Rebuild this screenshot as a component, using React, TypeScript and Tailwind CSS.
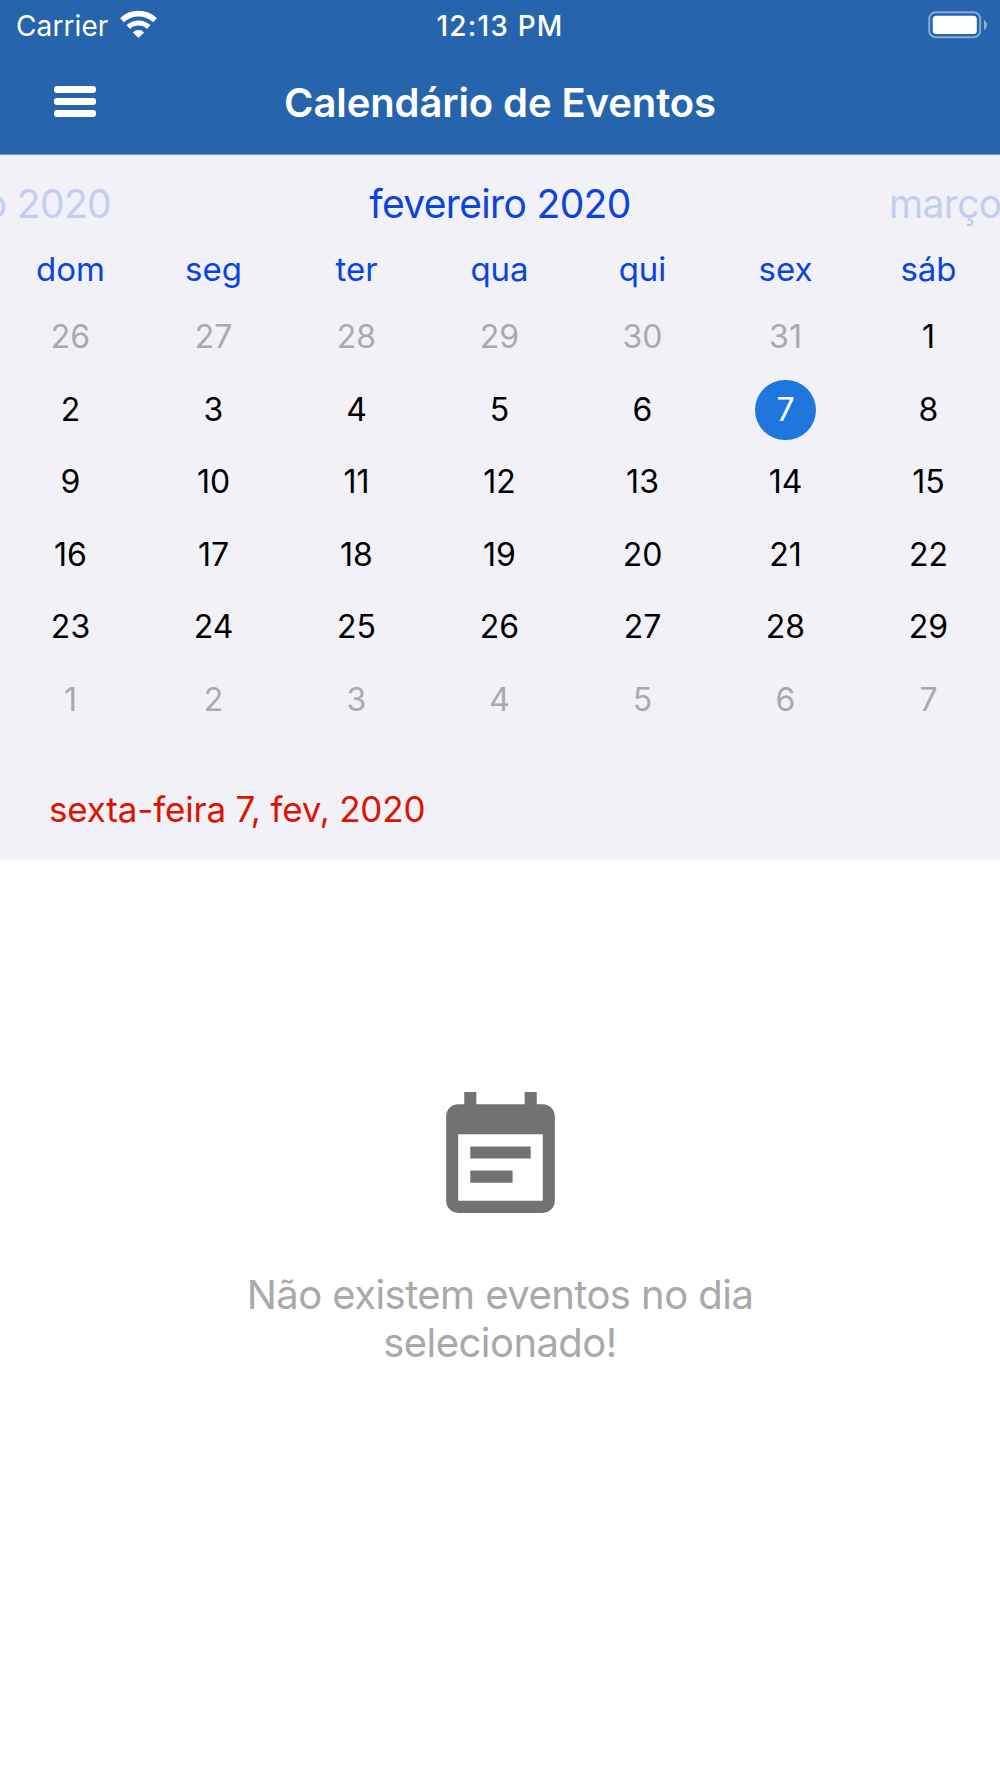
type Day = { day: number; muted?: boolean; selected?: boolean };

const weekdays = ['dom', 'seg', 'ter', 'qua', 'qui', 'sex', 'sáb'];

const days: Day[] = [
  ...[26, 27, 28, 29, 30, 31].map((day) => ({ day, muted: true })),
  ...Array.from({ length: 29 }, (_, i) => ({ day: i + 1, selected: i + 1 === 7 })),
  ...[1, 2, 3, 4, 5, 6, 7].map((day) => ({ day, muted: true })),
];

function WifiIcon() {
  return (
    <svg className="mb-[2px] ml-[12px] h-[28px] w-[37px]" viewBox="0 0 37 28" fill="none" stroke="white">
      <path d="M2 10.200a24 24 0 0 1 33 0" strokeWidth="5.600" />
      <path d="M8.300 17a15 15 0 0 1 20.400 0" strokeWidth="5.200" />
      <path d="M12.900 22.400a8 8 0 0 1 11.200 0L18.500 28z" fill="white" stroke="none" />
    </svg>
  );
}

function BatteryIcon() {
  return (
    <svg className="h-[28px] w-[59px]" viewBox="0 0 59 28">
      <rect x="1.200" y="1.200" width="51" height="25" rx="6.500" fill="none" stroke="white" strokeOpacity="0.45" strokeWidth="2" />
      <rect x="4.800" y="4.700" width="44" height="18.200" rx="3.500" fill="white" />
      <path d="M56 9c4 2.500 4 7.500 0 10z" fill="white" fillOpacity="0.5" />
    </svg>
  );
}

function Header() {
  return (
    <header className="h-[155px] border-b border-[#6d96cb] bg-[#2664ad] text-white">
      <div className="grid h-[50px] grid-cols-3 items-center">
        <div className="flex items-center pl-[16px] text-[28px]">
          <span className="pt-[2px] tracking-[0.1px]">Carrier</span>
          <WifiIcon />
        </div>
        <span className="pt-[2px] text-center text-[28px] font-[540] tracking-[1.2px]">12:13 PM</span>
        <div className="flex justify-end pr-[13px]">
          <BatteryIcon />
        </div>
      </div>
      <div className="grid h-[104px] grid-cols-[200px_1fr_200px] items-center">
        <button className="mb-[2px] ml-[54px] flex w-[42px] flex-col gap-[5px]" aria-label="Menu">
          <span className="h-[7px] w-full rounded-[3px] bg-white" />
          <span className="h-[7px] w-full rounded-[3px] bg-white" />
          <span className="h-[7px] w-full rounded-[3px] bg-white" />
        </button>
        <h1 className="pt-[2px] text-center text-[40px] font-[560] tracking-[-0.1px] whitespace-nowrap">
          Calendário de Eventos
        </h1>
      </div>
    </header>
  );
}

function Calendar() {
  return (
    <section className="h-[705px] bg-[#f2f1f7]">
      <div className="flex h-[98px] items-center justify-between overflow-hidden text-[39px] tracking-[-0.65px] whitespace-nowrap text-[#0a44e0]">
        <span className="flex w-[111px] justify-end opacity-20">janeiro 2020</span>
        <span>fevereiro 2020</span>
        <span className="w-[111px] opacity-20">março 2020</span>
      </div>
      <div className="-ml-[1px] grid h-[32px] grid-cols-7 items-center text-center text-[33px] leading-[32px] text-[#0a44e0]">
        {weekdays.map((name) => (
          <span key={name}>{name}</span>
        ))}
      </div>
      <div className="mt-[16px] -ml-[1px] grid auto-rows-[72.5px] grid-cols-7 place-items-center text-[32px]">
        {days.map(({ day, muted, selected }, i) => (
          <span
            key={i}
            className={`flex size-[60.5px] items-center justify-center rounded-full ${
              selected ? 'bg-[#1f77dd] text-white' : muted ? 'text-[#aaaaaa]' : 'text-black'
            }`}
          >
            {day}
          </span>
        ))}
      </div>
      <p className="mt-[49px] pl-[49px] text-[35px] leading-[48px] tracking-[-0.18px] text-[#dd1300]">
        sexta-feira 7, fev, 2020
      </p>
    </section>
  );
}

function EmptyState() {
  return (
    <main className="flex flex-1 flex-col items-center pt-[226px] text-[#a9a9a9]">
      <svg className="size-[145px]" viewBox="0 0 24 24" fill="#727272">
        <path d="M17 10H7v2h10v-2zm2-7h-1V1h-2v2H8V1H6v2H5c-1.110 0-2 .9-2 2v14c0 1.100.890 2 2 2h14c1.100 0 2-.9 2-2V5c0-1.100-.9-2-2-2zm0 16H5V8h14v11zm-5-5H7v2h7v-2z" />
      </svg>
      <p className="mt-[40px] text-center text-[40px] leading-[48.3px] tracking-[-0.55px]">
        Não existem eventos no dia
        <br />
        selecionado!
      </p>
    </main>
  );
}

export default function App() {
  return (
    <div className="flex h-[1778px] w-[1000px] flex-col overflow-hidden bg-white font-['Inter',sans-serif]">
      <Header />
      <Calendar />
      <EmptyState />
    </div>
  );
}
